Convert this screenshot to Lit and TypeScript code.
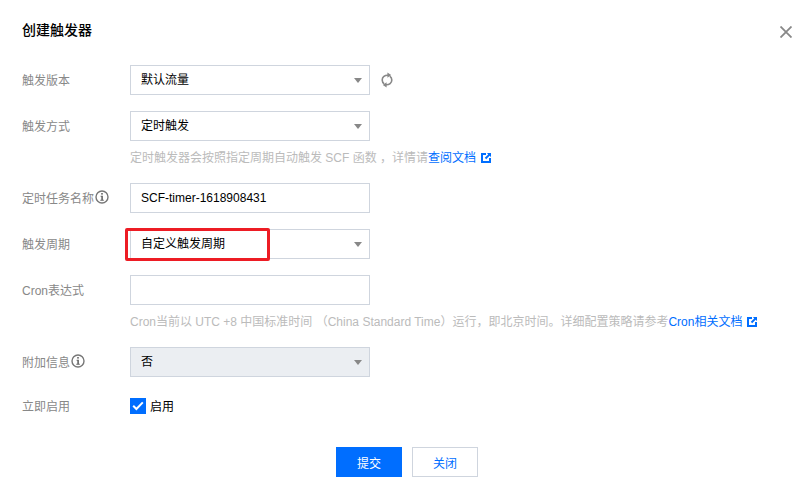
import { LitElement, html, css, svg } from "lit";
import { customElement } from "lit/decorators.js";

const infoIcon = svg`<svg class="info" width="14" height="14" viewBox="0 0 14 14">
  <circle cx="7" cy="7" r="6" fill="none" stroke="#777" stroke-width="1.4"/>
  <rect x="6.2" y="3" width="1.6" height="1.6" fill="#666"/>
  <path d="M5.6 5.8h2.3v4h.9v1H5.3v-1h1V6.8h-.7z" fill="#666"/>
</svg>`;

const linkIcon = svg`<svg class="ext" width="10" height="10" viewBox="0 0 10 10">
  <path d="M0 0h5v2H2v6h6V5h2v5H0z" fill="#006eff"/>
  <path d="M6 0h4v4L8.6 2.8 5.2 6.2 3.8 4.8 7.2 1.4z" fill="#006eff"/>
</svg>`;

@customElement("app-root")
export class AppRoot extends LitElement {
  static styles = css`
    :host {
      display: block;
      width: 812px;
      height: 496px;
      background: #fff;
      font-family: "Liberation Sans", "Noto Sans CJK SC", sans-serif;
      font-size: 12px;
      color: #000;
      overflow: hidden;
    }
    .dialog {
      position: relative;
      height: 496px;
      box-sizing: border-box;
      padding: 20px 22px 0;
    }
    .title {
      font-size: 14px;
      font-weight: 500;
      line-height: 20px;
      color: #000;
      margin-bottom: 25px;
    }
    .close {
      position: absolute;
      top: 26px;
      right: 20px;
      width: 12px;
      height: 12px;
    }
    .row {
      display: flex;
      align-items: center;
      min-height: 30px;
      margin-bottom: 16px;
    }
    .row.has-help {
      margin-bottom: 8px;
    }
    .row.short {
      min-height: 28px;
      margin-bottom: 27px;
      margin-top: -1px;
    }
    .label {
      width: 108px;
      flex: none;
      display: flex;
      align-items: center;
      gap: 1px;
      margin-top: -2px;
      color: #888;
      white-space: nowrap;
    }
    .field {
      box-sizing: border-box;
      width: 240px;
      height: 30px;
      border: 1px solid #cfd5de;
      background: #fff;
      padding: 0 10px;
      line-height: 28px;
      display: flex;
      align-items: center;
      justify-content: space-between;
      white-space: nowrap;
    }
    .field.disabled {
      background: #ebeef2;
    }
    .caret {
      width: 0;
      height: 0;
      margin-right: -3px;
      border-left: 4px solid transparent;
      border-right: 4px solid transparent;
      border-top: 5px solid #888;
    }
    .refresh {
      margin-left: 11px;
    }
    .help {
      margin: 0 0 16px 108px;
      line-height: 18px;
      color: #bbb;
      white-space: nowrap;
      display: flex;
      align-items: center;
    }
    .help a {
      color: #006eff;
      text-decoration: none;
    }
    .ext {
      margin-left: 5px;
    }
    .check {
      display: flex;
      align-items: center;
      gap: 4px;
      color: #000;
    }
    .check-text {
      margin-top: -2px;
    }
    .box {
      width: 16px;
      height: 16px;
      background: #006eff;
      display: flex;
      align-items: center;
      justify-content: center;
    }
    .footer {
      display: flex;
      justify-content: center;
      gap: 10px;
      padding-left: 2px;
    }
    .btn {
      box-sizing: border-box;
      width: 66px;
      height: 30px;
      display: flex;
      align-items: center;
      justify-content: center;
      border: 1px solid #cfd5de;
      background: #fff;
      color: #006eff;
    }
    .btn.primary {
      background: #006eff;
      border-color: #006eff;
      color: #fff;
    }
    .mark {
      position: absolute;
      left: 125px;
      top: 228px;
      width: 145px;
      height: 33px;
      box-sizing: border-box;
      border: 3px solid #ed1c24;
      border-radius: 2px;
    }
  `;

  render() {
    return html`<div class="dialog">
      <div class="title">创建触发器</div>
      <svg class="close" viewBox="0 0 12 12">
        <path d="M.5.5l11 11M11.5.5l-11 11" stroke="#888" stroke-width="1.8" fill="none"/>
      </svg>

      <div class="row">
        <div class="label">触发版本</div>
        <div class="field">默认流量<span class="caret"></span></div>
        <svg class="refresh" width="12" height="16" viewBox="0 0 12 16">
          <path d="M7 3.2C3.8 3 1.2 5 1.2 8c0 1.6.7 3 2 3.9" fill="none" stroke="#888" stroke-width="1.6"/>
          <path d="M5 12.8c3.2.2 5.8-1.8 5.8-4.8 0-1.6-.7-3-2-3.9" fill="none" stroke="#888" stroke-width="1.6"/>
          <path d="M6.4 0.4v5.4l3.8-2.7zM5.6 15.6v-5.4l-3.8 2.7z" fill="#888"/>
        </svg>
      </div>

      <div class="row has-help">
        <div class="label">触发方式</div>
        <div class="field">定时触发<span class="caret"></span></div>
      </div>
      <div class="help">
        <span>定时触发器会按照指定周期自动触发 SCF 函数 ，详情请<a href="#">查阅文档</a></span>${linkIcon}
      </div>

      <div class="row">
        <div class="label">定时任务名称${infoIcon}</div>
        <div class="field">SCF-timer-1618908431</div>
      </div>

      <div class="row">
        <div class="label">触发周期</div>
        <div class="field">自定义触发周期<span class="caret"></span></div>
      </div>

      <div class="row has-help">
        <div class="label">Cron表达式</div>
        <div class="field"></div>
      </div>
      <div class="help">
        <span>Cron当前以 UTC +8 中国标准时间 （China Standard Time）运行，即北京时间。详细配置策略请参考<a href="#">Cron相关文档</a></span>${linkIcon}
      </div>

      <div class="row">
        <div class="label">附加信息${infoIcon}</div>
        <div class="field disabled">否<span class="caret"></span></div>
      </div>

      <div class="row short">
        <div class="label">立即启用</div>
        <div class="check">
          <span class="box">
            <svg width="12" height="10" viewBox="0 0 12 10">
              <path d="M1.2 4.8l3.2 3.2 6.4-6.6" fill="none" stroke="#fff" stroke-width="2"/>
            </svg>
          </span>
          <span class="check-text">启用</span>
        </div>
      </div>

      <div class="footer">
        <div class="btn primary">提交</div>
        <div class="btn">关闭</div>
      </div>

      <div class="mark"></div>
    </div>`;
  }
}
